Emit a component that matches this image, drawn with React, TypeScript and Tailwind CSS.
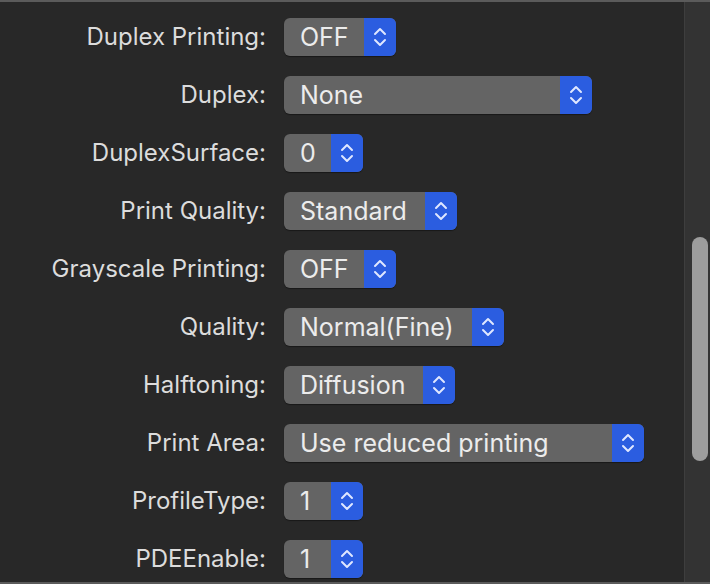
import React from "react";

type Row = { label: string; value: string; width: number };

const rows: Row[] = [
  { label: "Duplex Printing:", value: "OFF", width: 112 },
  { label: "Duplex:", value: "None", width: 308 },
  { label: "DuplexSurface:", value: "0", width: 79 },
  { label: "Print Quality:", value: "Standard", width: 173 },
  { label: "Grayscale Printing:", value: "OFF", width: 112 },
  { label: "Quality:", value: "Normal(Fine)", width: 220 },
  { label: "Halftoning:", value: "Diffusion", width: 171 },
  { label: "Print Area:", value: "Use reduced printing", width: 360 },
  { label: "ProfileType:", value: "1", width: 79 },
  { label: "PDEEnable:", value: "1", width: 79 },
];

function Chevrons() {
  return (
    <svg width="14" height="22" viewBox="0 0 14 22" fill="none">
      <path d="M2 8 L7 3 L12 8" stroke="#dfe7ff" strokeWidth="2" strokeLinecap="round" strokeLinejoin="round" />
      <path d="M2 14 L7 19 L12 14" stroke="#dfe7ff" strokeWidth="2" strokeLinecap="round" strokeLinejoin="round" />
    </svg>
  );
}

function PopUp({ value, width }: { value: string; width: number }) {
  return (
    <div
      className="flex h-[38px] overflow-hidden rounded-[6px] bg-[#646464] shadow-[0_1px_1px_rgba(0,0,0,0.4)]"
      style={{ width }}
    >
      <span className="flex-1 truncate pl-[16px] text-[25px] leading-[38px] text-[#ececec]">{value}</span>
      <span className="grid w-[32px] shrink-0 place-items-center bg-[#2b5de0]">
        <Chevrons />
      </span>
    </div>
  );
}

export default function App() {
  return (
    <div
      className="flex h-[584px] w-[710px] border-y-2 border-[#5b5b5b] bg-[#282828]"
      style={{ fontFamily: "Inter, 'Noto Sans', sans-serif" }}
    >
      <div className="grid flex-1 grid-cols-[266px_auto] content-start gap-x-[18px] gap-y-[20px] pt-[16px]">
        {rows.map((r, i) => (
          <React.Fragment key={i}>
            <span className="whitespace-nowrap text-right text-[24px] leading-[38px] text-[#dcdcdc]">{r.label}</span>
            <PopUp value={r.value} width={r.width} />
          </React.Fragment>
        ))}
      </div>
      <div className="flex w-[26px] flex-col border-l border-[#3e3e3e] bg-[#333333] pt-[235px]">
        <div className="ml-[7px] h-[224px] w-[16px] rounded-full bg-[#9d9d9d]" />
      </div>
    </div>
  );
}
